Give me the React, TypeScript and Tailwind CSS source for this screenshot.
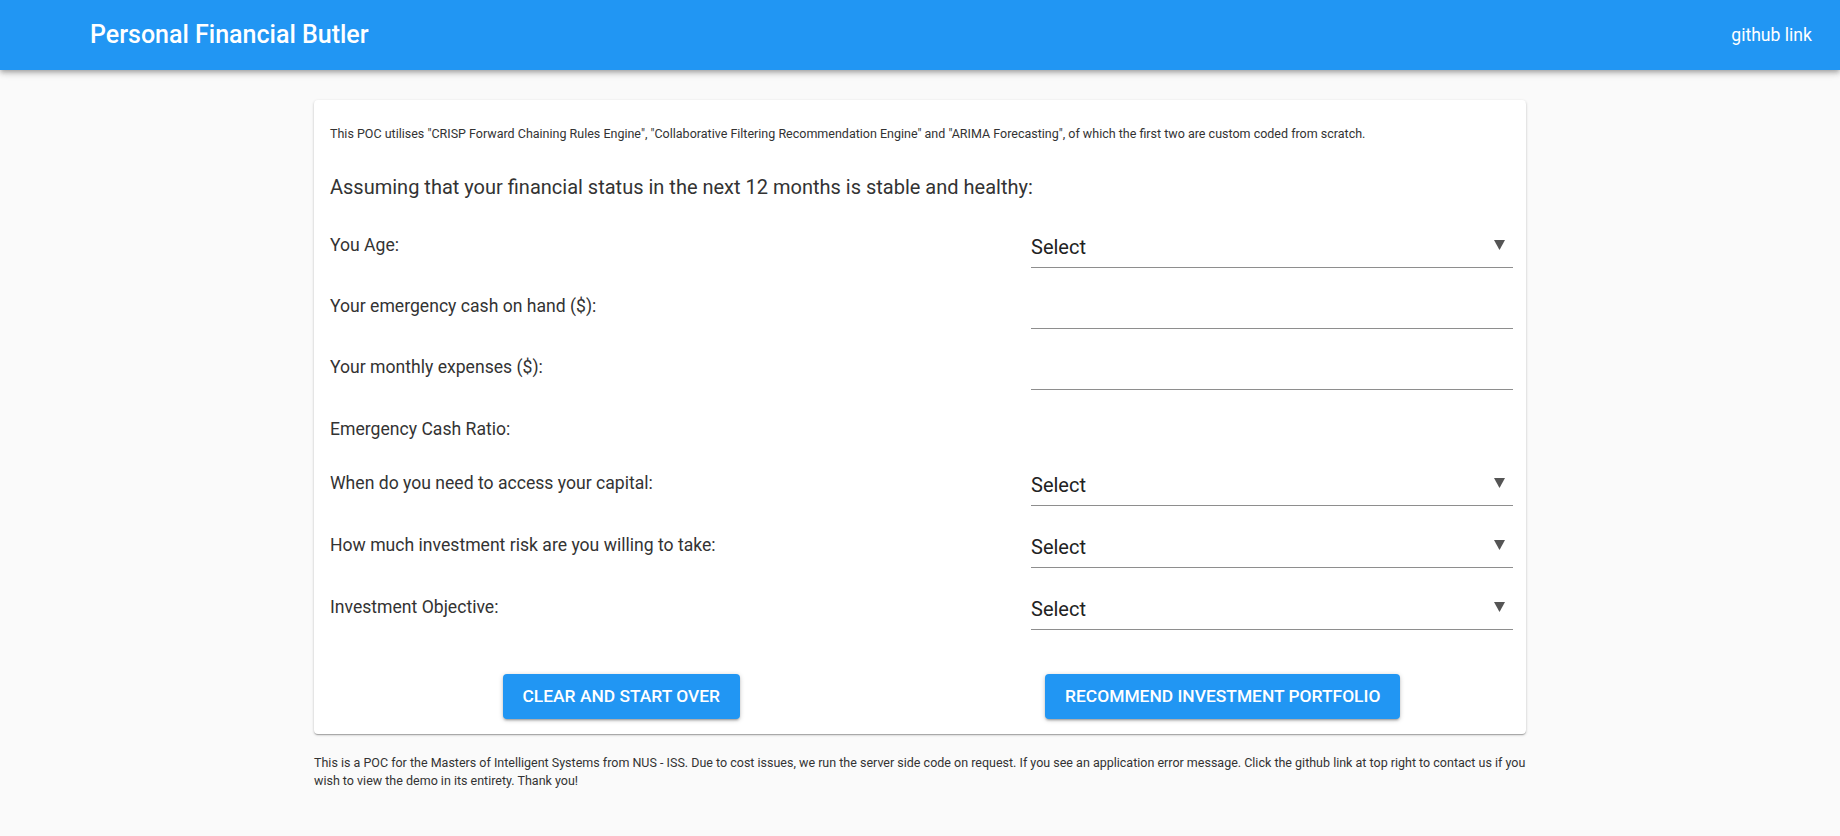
import React from "react";

// --- FORM ROWS ---
const ROWS = [
  { label: "You Age:", kind: "select", h: "h-[61px]" },
  { label: "Your emergency cash on hand ($):", kind: "input", h: "h-[61px]" },
  { label: "Your monthly expenses ($):", kind: "input", h: "h-[61px]" },
  { label: "Emergency Cash Ratio:", kind: "none", h: "h-[55px]" },
  { label: "When do you need to access your capital:", kind: "select", h: "h-[62px]" },
  { label: "How much investment risk are you willing to take:", kind: "select", h: "h-[62px]" },
  { label: "Investment Objective:", kind: "select", h: "h-[62px]" },
];

export default function App() {
  return (
    <div className="min-h-[836px] bg-[#fafafa] font-['Roboto',_'Liberation_Sans',_sans-serif] text-[#333]">
      {/* HEADER */}
      <header className="relative z-10 flex h-[70px] items-center justify-between bg-[#2196f3] pl-[90px] pr-[28px] text-white shadow-[0_2px_4px_-1px_rgba(0,0,0,0.2),0_4px_5px_0_rgba(0,0,0,0.14),0_1px_10px_0_rgba(0,0,0,0.12)]">
        <h1 className="text-[25px] font-medium">Personal Financial Butler</h1>
        <a className="text-[17.6px]">github link</a>
      </header>

      {/* MAIN CARD */}
      <main className="mx-auto w-[1212px] pt-[30px]">
        <div className="rounded-[4px] bg-white pt-[25px] pr-[13px] pb-[15px] pl-4 shadow-[0_1px_3px_0_rgba(0,0,0,0.2),0_1px_1px_0_rgba(0,0,0,0.14),0_2px_1px_-1px_rgba(0,0,0,0.12)]">
          <p className="text-[12.5px] leading-[18px]">
            This POC utilises "CRISP Forward Chaining Rules Engine", "Collaborative Filtering Recommendation Engine" and
            "ARIMA Forecasting", of which the first two are custom coded from scratch.
          </p>
          <h2 className="mt-[30px] text-[20px] leading-[28px]">
            Assuming that your financial status in the next 12 months is stable and healthy:
          </h2>

          <div className="mt-[13px]">
            {ROWS.map((row) => (
              <FormRow key={row.label} {...row} />
            ))}
          </div>

          {/* ACTIONS */}
          <div className="mt-[36px] grid grid-cols-2">
            <div className="flex justify-center pr-[9px]">
              <ActionButton>Clear and start over</ActionButton>
            </div>
            <div className="flex justify-center pl-[11px]">
              <ActionButton>Recommend investment portfolio</ActionButton>
            </div>
          </div>
        </div>

        <p className="mt-[20px] text-[12.5px] leading-[18.4px]">
          This is a POC for the Masters of Intelligent Systems from NUS - ISS. Due to cost issues, we run the server side
          code on request. If you see an application error message. Click the github link at top right to contact us if
          you wish to view the demo in its entirety. Thank you!
        </p>
      </main>
    </div>
  );
}

// --- SUB-COMPONENTS ---

function FormRow({ label, kind, h }: any) {
  return (
    <div className={`grid grid-cols-[1fr_482px] items-center ${h}`}>
      <span className={`text-[17.6px] leading-[24px] ${kind === "none" ? "pt-[9px]" : ""}`}>{label}</span>
      {kind === "select" && (
        <div className="flex h-[46px] items-center justify-between border-b border-[#8e8e8e] pt-[5px] pr-[8px] text-[20px] text-[#222]">
          <span>Select</span>
          <svg width="11" height="10" viewBox="0 0 11 10" className="mb-[4px]">
            <polygon points="0,0 11,0 5.5,10" fill="#555" />
          </svg>
        </div>
      )}
      {kind === "input" && <div className="h-[46px] border-b border-[#8e8e8e]" />}
      {kind === "none" && <div />}
    </div>
  );
}

function ActionButton({ children }: any) {
  return (
    <button className="h-[45px] rounded-[4px] bg-[#2196f3] px-[20px] text-[17.4px] font-medium uppercase text-white shadow-[0_1px_5px_0_rgba(0,0,0,0.2),0_2px_2px_0_rgba(0,0,0,0.14),0_3px_1px_-2px_rgba(0,0,0,0.12)]">
      {children}
    </button>
  );
}
